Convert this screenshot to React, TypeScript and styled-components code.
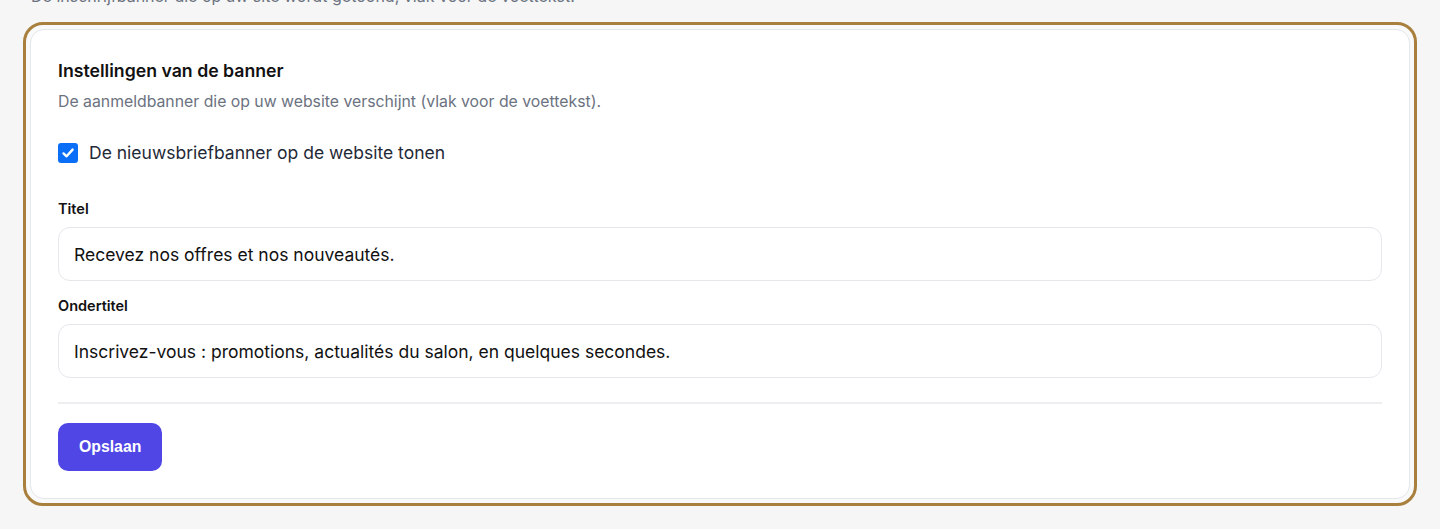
import React, { useState } from "react";
import styled, { createGlobalStyle } from "styled-components";

const GlobalStyle = createGlobalStyle`
  html, body {
    margin: 0;
    padding: 0;
    background: #f6f6f6;
  }
  body {
    font-family: "Inter", "Noto Sans", sans-serif;
    color: #111827;
  }
`;

const Page = styled.div`
  padding: 0 23px 23px 23px;
  height: 529px;
  box-sizing: border-box;
  overflow: hidden;
`;

const Intro = styled.p`
  margin: -15px 0 15px 8px;
  font-size: 16px;
  line-height: 22px;
  color: #6b7280;
`;

const Highlight = styled.div`
  border: 3px solid #a87f3c;
  border-radius: 20px;
  padding: 4px;
  background: #f9f9f9;
`;

const Card = styled.section`
  background: #ffffff;
  border: 1px solid #e5e7eb;
  border-radius: 14px;
  padding: 30px 27px 27px 27px;
  display: flex;
  flex-direction: column;
`;

const CardTitle = styled.h2`
  margin: 0;
  font-size: 17.7px;
  line-height: 22px;
  font-weight: 600;
  color: #111111;
`;

const CardSubtitle = styled.p`
  margin: 10px 0 0 0;
  font-size: 15.8px;
  line-height: 20px;
  color: #6b7280;
`;

const CheckRow = styled.label`
  display: flex;
  align-items: center;
  gap: 11px;
  margin-top: 29px;
  font-size: 17.5px;
  line-height: 24px;
  color: #1f2937;
  cursor: pointer;
`;

const Box = styled.span<{ $checked: boolean }>`
  width: 20px;
  height: 20px;
  border-radius: 3px;
  background: ${(p) => (p.$checked ? "#0b6ef7" : "#ffffff")};
  border: ${(p) => (p.$checked ? "none" : "1px solid #9ca3af")};
  display: flex;
  align-items: center;
  justify-content: center;
  box-sizing: border-box;
`;

const HiddenInput = styled.input`
  display: none;
`;

const Field = styled.div`
  display: flex;
  flex-direction: column;
  gap: 9px;
  & + & {
    margin-top: 16px;
  }
`;

const FieldLabel = styled.span`
  font-size: 14.5px;
  line-height: 18px;
  font-weight: 600;
  color: #111111;
`;

const TextInput = styled.input`
  height: 54px;
  box-sizing: border-box;
  border: 1px solid #e5e7eb;
  border-radius: 12px;
  padding: 0 15px;
  font-family: "Inter", "Noto Sans", sans-serif;
  font-size: 17.5px;
  color: #111111;
  background: #ffffff;
  outline: none;
`;

const Fields = styled.div`
  margin-top: 35px;
  display: flex;
  flex-direction: column;
`;

const Divider = styled.hr`
  border: none;
  height: 2px;
  background: #eeeef0;
  margin: 24px 0 19px 0;
`;

const SaveButton = styled.button`
  align-self: flex-start;
  height: 48px;
  padding: 0 21px;
  border: none;
  border-radius: 10px;
  background: #4f46e5;
  color: #ffffff;
  font-family: "Liberation Sans", Arial, sans-serif;
  font-weight: 700;
  font-size: 15.8px;
  cursor: pointer;
`;

const App = () => {
  const [show, setShow] = useState(true);
  const [title, setTitle] = useState("Recevez nos offres et nos nouveautés.");
  const [subtitle, setSubtitle] = useState(
    "Inscrivez-vous : promotions, actualités du salon, en quelques secondes."
  );

  return (
    <>
      <GlobalStyle />
      <Page>
        <Intro>
          De inschrijfbanner die op uw site wordt getoond, vlak voor de
          voettekst.
        </Intro>
        <Highlight>
          <Card>
            <CardTitle>Instellingen van de banner</CardTitle>
            <CardSubtitle>
              De aanmeldbanner die op uw website verschijnt (vlak voor de
              voettekst).
            </CardSubtitle>
            <CheckRow>
              <HiddenInput
                type="checkbox"
                checked={show}
                onChange={(e) => setShow(e.target.checked)}
              />
              <Box $checked={show}>
                {show && (
                  <svg width="14" height="14" viewBox="0 0 14 14">
                    <path
                      d="M2.5 7.4 L5.6 10.3 L11.6 3.6"
                      fill="none"
                      stroke="#ffffff"
                      strokeWidth="2.4"
                      strokeLinecap="round"
                      strokeLinejoin="round"
                    />
                  </svg>
                )}
              </Box>
              De nieuwsbriefbanner op de website tonen
            </CheckRow>
            <Fields>
              <Field>
                <FieldLabel>Titel</FieldLabel>
                <TextInput
                  value={title}
                  onChange={(e) => setTitle(e.target.value)}
                />
              </Field>
              <Field>
                <FieldLabel>Ondertitel</FieldLabel>
                <TextInput
                  value={subtitle}
                  onChange={(e) => setSubtitle(e.target.value)}
                />
              </Field>
            </Fields>
            <Divider />
            <SaveButton>Opslaan</SaveButton>
          </Card>
        </Highlight>
      </Page>
    </>
  );
};

export default App;
